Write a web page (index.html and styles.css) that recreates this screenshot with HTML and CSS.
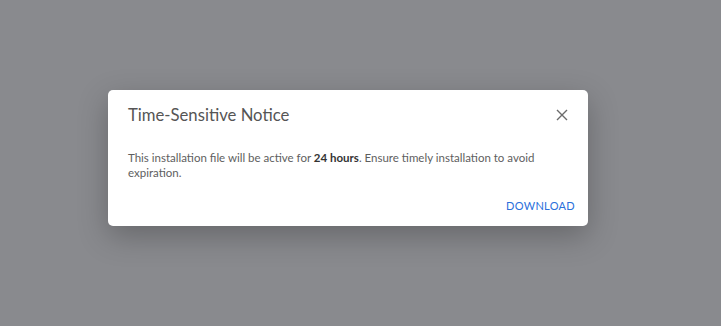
FILE: index.html
```html
<!DOCTYPE html>
<html lang="en">
<head>
  <meta charset="UTF-8">
  <title>Notice</title>
  <link rel="stylesheet" href="styles.css">
</head>
<body>
  <div class="overlay">
    <div class="dialog">
      <div class="dialog-header">
        <h2 class="dialog-title">Time-Sensitive Notice</h2>
        <button type="button" class="close-btn" aria-label="Close">
          <svg width="12" height="12" viewBox="0 0 12 12">
            <path d="M1 1L11 11M11 1L1 11" stroke="#6b6b6b" stroke-width="1.4" fill="none"/>
          </svg>
        </button>
      </div>
      <div class="dialog-body">
        This installation file will be active for <b>24 hours</b>. Ensure timely installation to avoid expiration.
      </div>
      <div class="dialog-actions">
        <button type="button" class="text-btn">DOWNLOAD</button>
      </div>
    </div>
  </div>
</body>
</html>
```

FILE: styles.css
```css
body {
    margin: 0;
    font-family: "Lato", "Noto Sans", sans-serif;
}
.overlay {
    width: 100vw;
    height: 100vh;
    box-sizing: border-box;
    padding: 0 25px 10px 0;
    background: #898a8e;
    display: flex;
    justify-content: center;
    align-items: center;
}
.dialog {
    width: 480px;
    height: 136px;
    box-sizing: border-box;
    background: #ffffff;
    border-radius: 5px;
    box-shadow: 0 10px 30px rgba(0, 0, 0, 0.25);
    display: flex;
    flex-direction: column;
}
.dialog-header {
    display: flex;
    justify-content: space-between;
    align-items: center;
    padding: 13px 20px 0 20px;
    height: 24px;
}
.dialog-title {
    margin: 0;
    font-size: 16.7px;
    font-weight: 400;
    color: #555555;
    line-height: 24px;
}
.close-btn {
    border: none;
    background: none;
    padding: 0;
    width: 12px;
    height: 12px;
    display: flex;
    cursor: pointer;
}
.dialog-body {
    padding: 23px 20px 0 20px;
    font-size: 11.5px;
    line-height: 15px;
    color: #5e5e5e;
}
.dialog-body b {
    color: #333333;
    font-weight: 700;
}
.dialog-actions {
    margin-top: auto;
    display: flex;
    justify-content: flex-end;
    padding: 0 13px 13px 0;
}
.text-btn {
    border: none;
    background: none;
    padding: 0;
    font-family: inherit;
    font-size: 11px;
    line-height: 14px;
    color: #2a6fdb;
    letter-spacing: 0.3px;
    cursor: pointer;
}
```
